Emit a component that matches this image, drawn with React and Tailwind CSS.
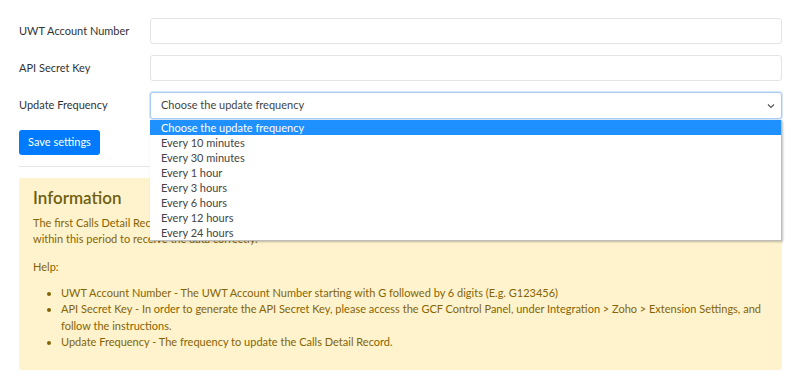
import React from "react";

const OPTIONS = [
  "Choose the update frequency",
  "Every 10 minutes",
  "Every 30 minutes",
  "Every 1 hour",
  "Every 3 hours",
  "Every 6 hours",
  "Every 12 hours",
  "Every 24 hours",
];

function Field({ label, children }) {
  return (
    <div className="flex items-center">
      <label className="w-[131px] shrink-0 text-[11px] text-[#333]">{label}</label>
      <div className="flex-1">{children}</div>
    </div>
  );
}

export default function App() {
  return (
    <div className="w-[800px] h-[385px] bg-white overflow-hidden font-['Lato',sans-serif] pl-[19px] pr-[18px] pt-[18px]">
      <div className="flex flex-col gap-[11px]">
        <Field label="UWT Account Number">
          <div className="h-[26px] rounded-[3px] border border-[#e3e3e3] bg-white" />
        </Field>
        <Field label="API Secret Key">
          <div className="h-[26px] rounded-[3px] border border-[#e3e3e3] bg-white" />
        </Field>
        <Field label="Update Frequency">
          <div className="relative">
            <div className="h-[27px] rounded-[3px] border border-[#a9ccf4] shadow-[0_0_0_1px_#d7e7fb] bg-white flex items-center justify-between pl-[10px] pr-[6px] text-[11px] text-[#444]">
              <span>Choose the update frequency</span>
              <svg width="8" height="6" viewBox="0 0 8 6" className="text-[#555]">
                <path d="M1 1.5 L4 4.5 L7 1.5" fill="none" stroke="currentColor" strokeWidth="1.2" />
              </svg>
            </div>
            <ul className="absolute left-0 right-0 top-[28px] z-10 bg-white border-r border-b border-[#bdbdbd] shadow-[1px_1px_2px_rgba(0,0,0,0.25)] text-[11px] text-[#444]">
              {OPTIONS.map((o, i) => (
                <li
                  key={o}
                  className={`h-[15px] leading-[15px] pl-[11px] ${i === 0 ? "bg-[#1e90ff] text-white" : ""}`}
                >
                  {o}
                </li>
              ))}
            </ul>
          </div>
        </Field>
      </div>

      <button className="mt-[11px] h-[25px] w-[81px] rounded-[3px] bg-[#007bff] text-white text-[11px]">
        Save settings
      </button>

      <hr className="mt-[11px] border-t border-[#e6e6e6]" />

      <div className="mt-[11px] h-[192px] rounded-[3px] bg-[#fff3cd] text-[#856404] pl-[14px] pr-[10px] pt-[9px]">
        <h4 className="text-[17px] font-semibold leading-[22px] text-[#6f5f10]">Information</h4>
        <p className="mt-[6px] text-[11px] leading-[16px]">
          The first Calls Detail Record will be retrieved within 24 hours after saving the settings. Please keep the settings unchanged
          <br />
          within this period to receive the data correctly.
        </p>
        <p className="mt-[12px] text-[11px] leading-[16px]">Help:</p>
        <ul className="mt-[10px] list-disc pl-[28px] text-[11px] leading-[16.3px]">
          <li>UWT Account Number - The UWT Account Number starting with G followed by 6 digits (E.g. G123456)</li>
          <li>
            API Secret Key - In order to generate the API Secret Key, please access the GCF Control Panel, under Integration &gt; Zoho &gt; Extension Settings, and follow the instructions.
          </li>
          <li>Update Frequency - The frequency to update the Calls Detail Record.</li>
        </ul>
      </div>
    </div>
  );
}
